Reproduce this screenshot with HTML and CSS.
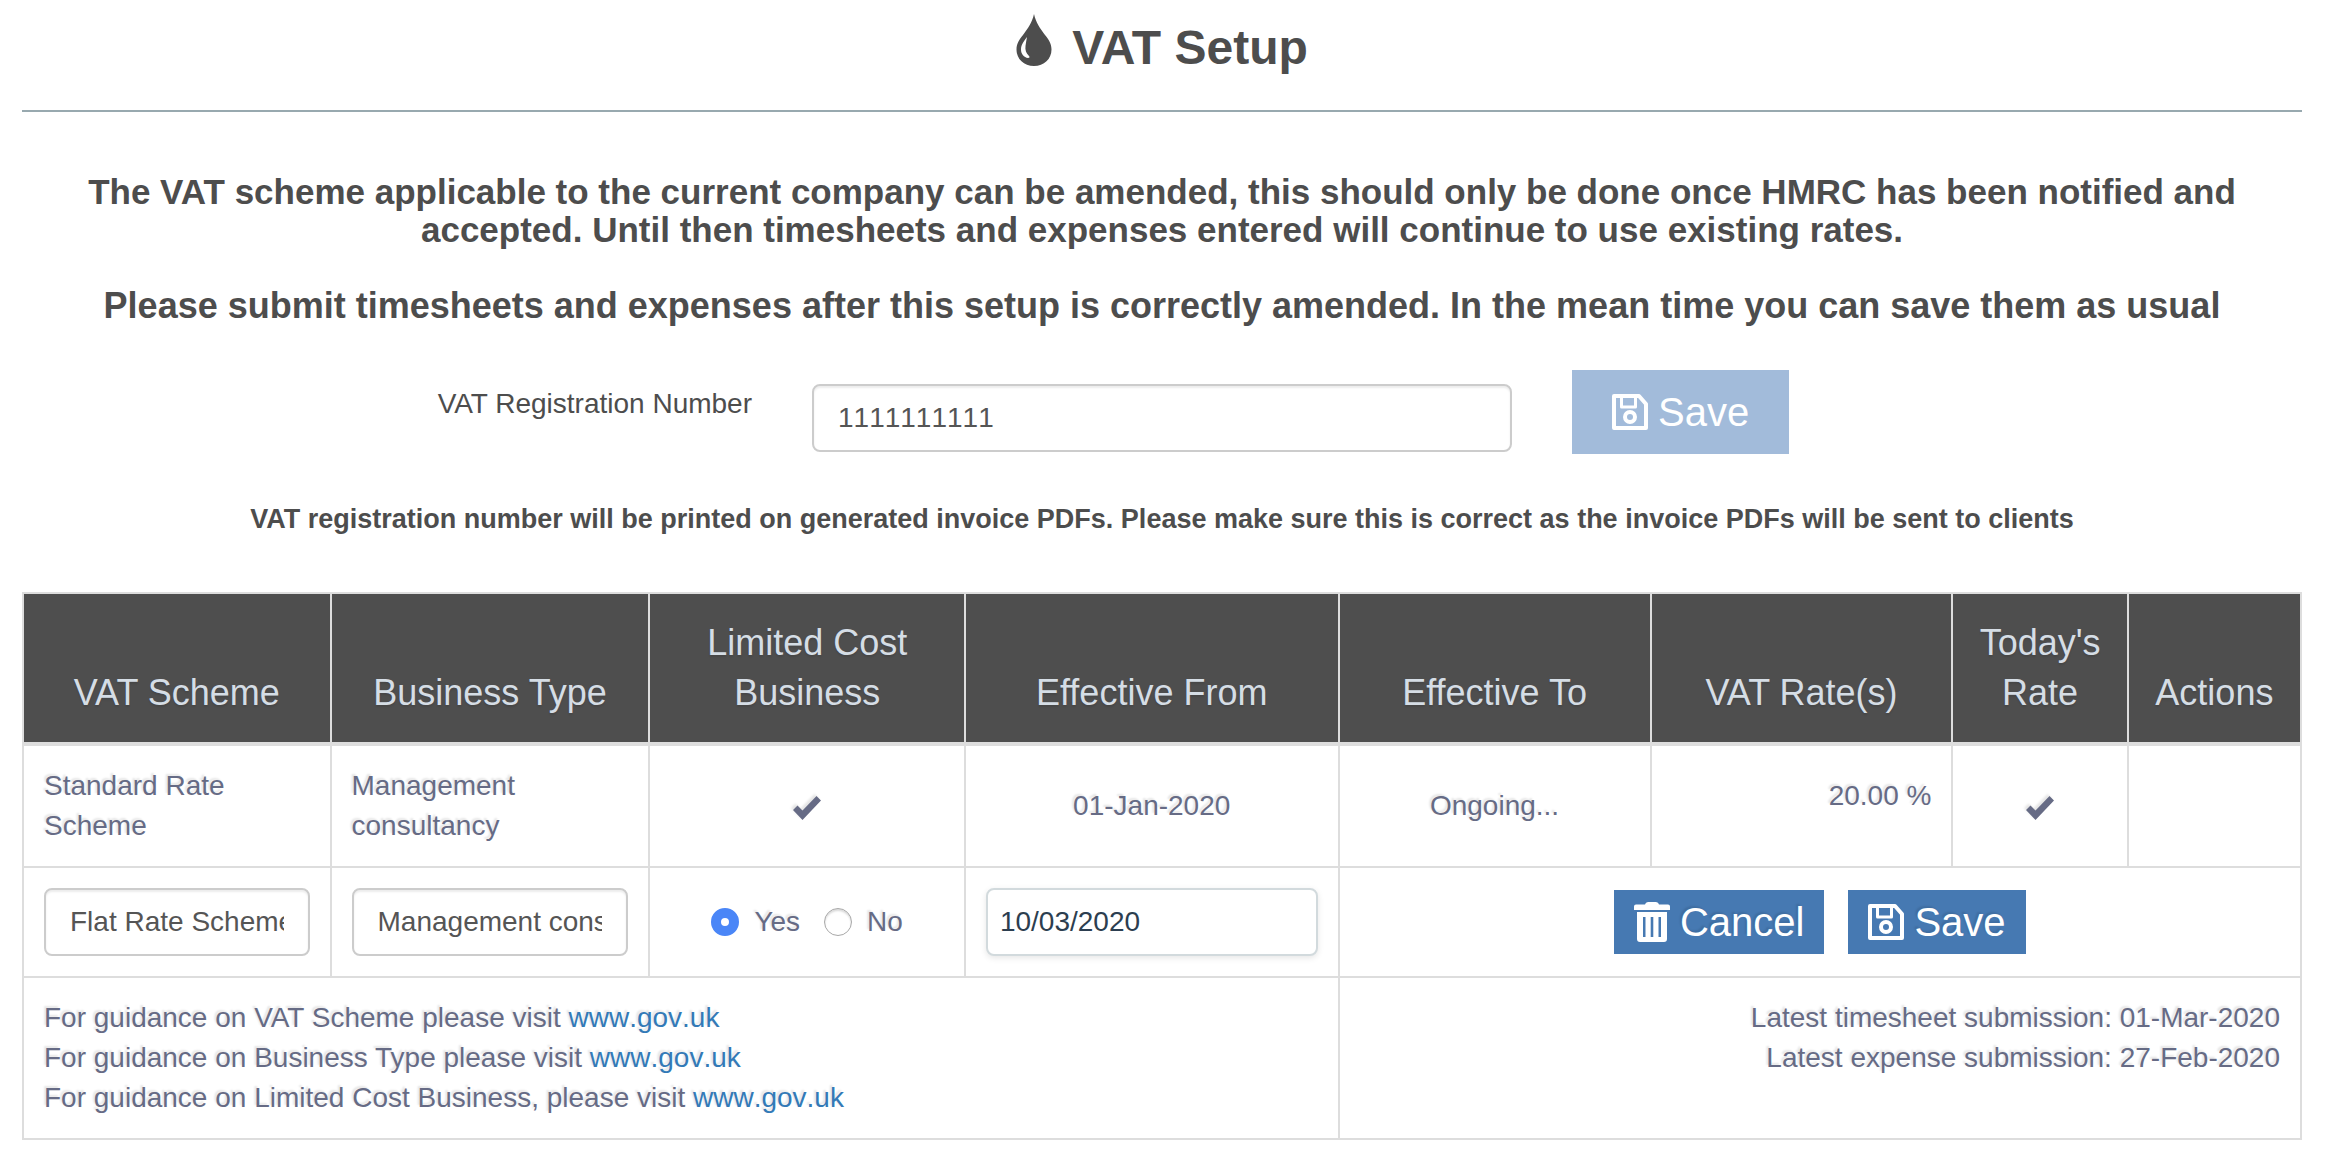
FILE: index.html
```html
<!DOCTYPE html>
<html lang="en">
<head>
  <meta charset="UTF-8">
  <title>VAT Setup</title>
  <link rel="stylesheet" href="styles.css">
</head>
<body>
  <svg class="sprite" aria-hidden="true">
    <symbol id="icon-save" viewBox="0 0 36 36">
      <path fill="none" stroke="currentColor" stroke-width="4" stroke-linejoin="round" d="M2 2h25l7 8v24H2z"/>
      <path fill="none" stroke="currentColor" stroke-width="3" stroke-linejoin="round" d="M9.500 3v10h14V3"/>
      <circle cx="18" cy="23" r="5" fill="none" stroke="currentColor" stroke-width="4"/>
    </symbol>
    <symbol id="icon-trash" viewBox="0 0 36 40">
      <path fill="currentColor" fill-rule="evenodd" d="M11 2.500Q11.500 0 14 0h8q2.500 0 3 2.500h9q2 0 2 2V8H0V4.500q0-2 2-2zM3 10h30v27q0 3-3 3H6q-3 0-3-3zM9 15v20h2.500V15zM16.700 15v20h2.600V15zM24.500 15v20H27V15z"/>
    </symbol>
    <symbol id="icon-ok" viewBox="0 0 28 24">
      <path fill="currentColor" d="M0 14 4.500 9.500l5 5L23.500 0 28 4.500 9.500 24z"/>
    </symbol>
  </svg>

  <h1 class="page-title">
    <svg class="icon-drop" viewBox="0 0 36 52" aria-hidden="true">
      <path fill="currentColor" d="M18 0c2 9 6 14 11 21 4 5 6.500 9 6.500 14.500C35.500 45 28 52 18 52S.5 45 .5 35.500C.5 30 3 26 7 21 12 14 16 9 18 0z"/>
      <path fill="#fff" d="M11 23c-3 4-6 7.500-6 12.500 0 4.500 3 8 7 8.500 1.500 0 2-1 1-2-3-3-4-6-3.500-10 .3-3 1-6 1.500-9z"/>
    </svg>
    VAT Setup
  </h1>

  <div class="intro">
    <h3 class="intro-text">The VAT scheme applicable to the current company can be amended, this should only be done once HMRC has been notified and accepted. Until then timesheets and expenses entered will continue to use existing rates.</h3>
    <h3 class="intro-text intro-strong">Please submit timesheets and expenses after this setup is correctly amended. In the mean time you can save them as usual</h3>
  </div>

  <form class="reg-form">
    <label class="reg-label" for="vat-number">VAT Registration Number</label>
    <input class="form-control" id="vat-number" type="text" value="1111111111">
    <button class="btn btn-large" type="button" disabled><svg class="icon-save"><use href="#icon-save"/></svg>Save</button>
  </form>

  <p class="note">VAT registration number will be printed on generated invoice PDFs. Please make sure this is correct as the invoice PDFs will be sent to clients</p>

  <table class="vat-table">
    <colgroup>
      <col class="col-scheme"><col class="col-type"><col class="col-limited"><col class="col-from">
      <col class="col-to"><col class="col-rates"><col class="col-today"><col class="col-actions">
    </colgroup>
    <thead>
      <tr>
        <th>VAT Scheme</th>
        <th>Business Type</th>
        <th>Limited Cost Business</th>
        <th>Effective From</th>
        <th>Effective To</th>
        <th>VAT Rate(s)</th>
        <th>Today's Rate</th>
        <th>Actions</th>
      </tr>
    </thead>
    <tbody>
      <tr>
        <td>Standard Rate Scheme</td>
        <td>Management consultancy</td>
        <td class="center"><svg class="icon-ok" role="img" aria-label="Yes"><use href="#icon-ok"/></svg></td>
        <td class="center">01-Jan-2020</td>
        <td class="center">Ongoing...</td>
        <td class="rate">20.00 %</td>
        <td class="center"><svg class="icon-ok" role="img" aria-label="Yes"><use href="#icon-ok"/></svg></td>
        <td></td>
      </tr>
      <tr>
        <td>
          <select class="form-control" aria-label="VAT Scheme">
            <option>Flat Rate Scheme</option>
            <option>Standard Rate Scheme</option>
          </select>
        </td>
        <td>
          <select class="form-control" aria-label="Business Type">
            <option>Management consultancy</option>
          </select>
        </td>
        <td>
          <div class="radios">
            <label class="radio"><input type="radio" name="limited" checked>Yes</label>
            <label class="radio"><input type="radio" name="limited">No</label>
          </div>
        </td>
        <td><input class="form-control date" type="text" value="10/03/2020" aria-label="Effective From"></td>
        <td colspan="4">
          <div class="actions">
            <button class="btn" type="button"><svg class="icon-trash"><use href="#icon-trash"/></svg>Cancel</button>
            <button class="btn" type="button"><svg class="icon-save"><use href="#icon-save"/></svg>Save</button>
          </div>
        </td>
      </tr>
      <tr>
        <td class="top" colspan="4">
          For guidance on VAT Scheme please visit <a href="https://www.gov.uk">www.gov.uk</a><br>
          For guidance on Business Type please visit <a href="https://www.gov.uk">www.gov.uk</a><br>
          For guidance on Limited Cost Business, please visit <a href="https://www.gov.uk">www.gov.uk</a>
        </td>
        <td class="top right" colspan="4">
          Latest timesheet submission: 01-Mar-2020<br>
          Latest expense submission: 27-Feb-2020
        </td>
      </tr>
    </tbody>
  </table>
</body>
</html>
```
FILE: styles.css
```css
* { box-sizing: border-box; }
body { margin: 0; padding: 0 26px 0 22px; background: #fff; color: #4d4d4d; font: 28px/40px "Liberation Sans", Arial, sans-serif; }
.sprite { display: none; }

.page-title { display: flex; justify-content: center; align-items: center; gap: 20px; margin: 0; padding: 0 0 14px; height: 112px; border-bottom: 2px solid #98a9af; font-size: 48px; line-height: 56px; }
.icon-drop { width: 36px; height: 52px; margin-bottom: 16px; }

.intro { margin-top: 61px; padding: 0 40px; text-align: center; }
.intro-text { margin: 0 0 38px; font-size: 35px; line-height: 38px; }
.intro-strong { font-size: 36px; }

.reg-form { display: grid; grid-template-columns: repeat(3, 1fr); align-items: start; margin-top: 45px; }
.reg-label { padding: 14px 30px 0; text-align: right; }
.reg-form .form-control { margin: 14px 30px 0; width: auto; }
.reg-form .btn { margin-left: 30px; justify-self: start; }

.form-control { display: block; width: 100%; height: 68px; padding: 0 24px; border: 2px solid #ccc; border-radius: 8px; background: #fff; box-shadow: inset 0 2px 2px rgba(0, 0, 0, .075); color: #555; font: inherit; font-kerning: none; appearance: none; }
.date { padding: 0 12px; border-color: #d2dadd; box-shadow: 0 2px 6px rgba(0, 0, 0, .1); color: #2c3e50; }

.btn { display: flex; align-items: center; gap: 10px; height: 64px; padding: 0 20px; border: 0; background: #4679b2; color: #fff; font: 40px/56px "Liberation Sans", Arial, sans-serif; text-shadow: -2px -2px 2px rgba(0, 0, 0, .1); }
.btn-large { height: 84px; padding: 0 40px; text-shadow: none; }
.btn:disabled { background: #a2bbda; }
.icon-save { width: 36px; height: 36px; }
.icon-trash { width: 36px; height: 40px; }

.note { margin: 45px 0 0; text-align: center; font-size: 27px; font-weight: bold; }

.vat-table { width: 100%; margin-top: 53px; border-collapse: collapse; table-layout: fixed; }
.col-scheme { width: 13.5%; }
.col-type { width: 14%; }
.col-limited { width: 13.85%; }
.col-from { width: 16.4%; }
.col-to { width: 13.7%; }
.col-rates { width: 13.25%; }
.col-today { width: 7.7%; }
.col-actions { width: 7.6%; }
th, td { border: 2px solid #ddd; }
th { height: 151px; padding: 20px 16px 24px; border-bottom-width: 4px; background: #4e4e4e; color: #d5dde5; font-size: 36px; font-weight: normal; line-height: 50px; vertical-align: bottom; text-shadow: 0 2px 2px rgba(0, 0, 0, .1); }
td { padding: 20px; color: #666b85; text-shadow: -2px -2px 2px rgba(0, 0, 0, .1); vertical-align: middle; }
.center { text-align: center; }
.right { text-align: right; }
.top { vertical-align: top; }
.rate { padding-top: 30px; text-align: right; vertical-align: top; }
td .form-control { text-shadow: none; }
.icon-ok { width: 28px; height: 24px; vertical-align: middle; filter: drop-shadow(-2px -2px 1px rgba(0, 0, 0, .1)); }

.radios { display: flex; justify-content: center; gap: 24px; }
.radio { display: flex; align-items: center; gap: 15px; }
.radio input { width: 28px; height: 28px; margin: 0; border: 1px solid #a8a8a8; border-radius: 50%; background: #fff; box-shadow: inset 0 2px 2px rgba(0, 0, 0, .15); appearance: none; }
.radio input:checked { border: 10px solid #4a86f7; box-shadow: none; }

.actions { display: flex; justify-content: center; gap: 24px; }
a { color: #337ab7; text-decoration: none; font-kerning: none; }
```
